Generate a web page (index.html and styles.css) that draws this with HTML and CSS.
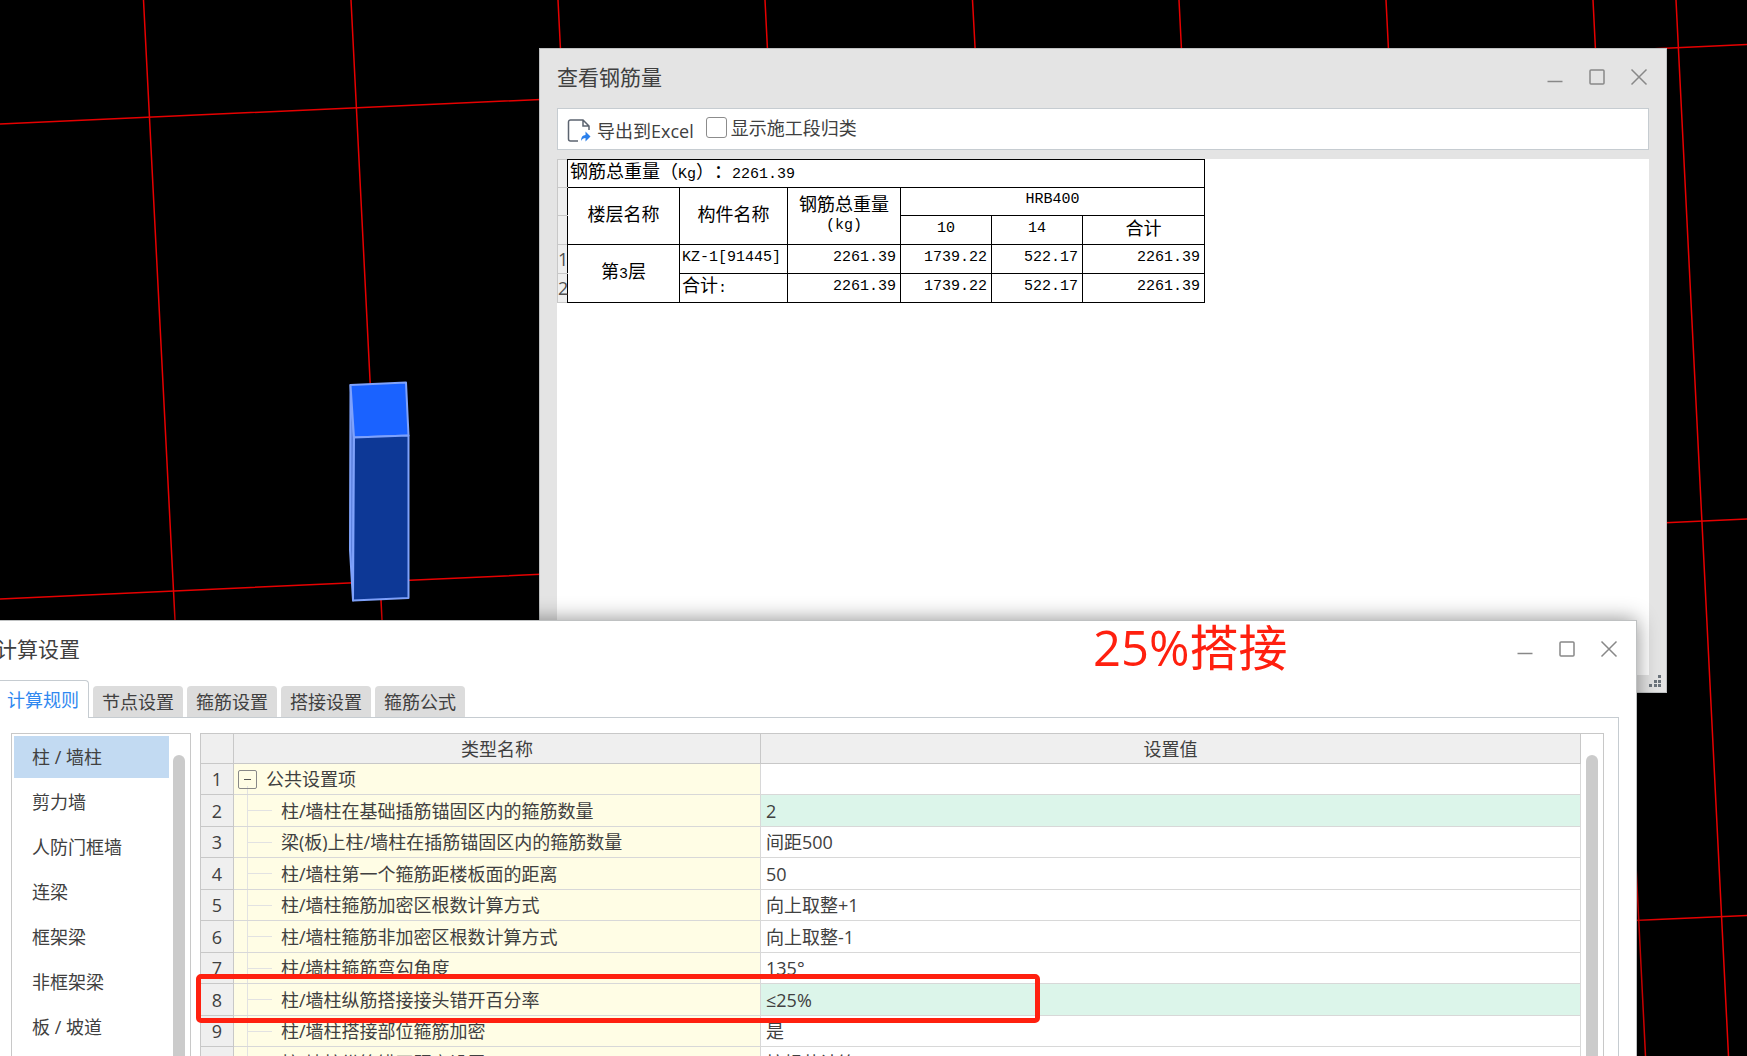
FILE: index.html
```html
<!DOCTYPE html>
<html lang="zh-CN">
<head>
<meta charset="utf-8">
<meta name="viewport" content="width=device-width, initial-scale=1">
<title>计算设置</title>
<link rel="stylesheet" href="styles.css">
</head>
<body>
<main class="desktop">
  <svg class="scene" aria-hidden="true">
    <g class="axis">
      <path d="M0 124L1747 44.500M0 599L1747 519M1600 922L1747 915.500"/>
      <path d="M143.500 0L175.500 630M351 0L382.500 630M558 0L565 140M765 0L772 140M972.500 0L980 140M1179 0L1186 140M1386 0L1393 140M1593 0L1645.500 1056M1676 0L1728.500 1056"/>
    </g>
    <g class="column">
      <path class="column-side" d="M350.500 385L354 437.500L353 600.500L350 550Z"/>
      <path class="column-top" d="M350.500 385L406 382.500L408.500 435.500L354 437.500Z"/>
      <path class="column-front" d="M354 437.500L408.500 435.500V598L353 600.500Z"/>
    </g>
  </svg>

  <section class="window window-report" aria-labelledby="report-title">
    <header class="titlebar">
      <h2 class="title" id="report-title">查看钢筋量</h2>
      <div class="controls">
        <button class="control" type="button" aria-label="最小化"><svg viewBox="0 0 18 18"><path d="M1.500 13.500h15"/></svg></button>
        <button class="control" type="button" aria-label="最大化"><svg viewBox="0 0 18 18"><rect x="2" y="2" width="14" height="14" rx="1"/></svg></button>
        <button class="control" type="button" aria-label="关闭"><svg viewBox="0 0 18 18"><path d="M1.500 1.500l15 15M16.500 1.500l-15 15"/></svg></button>
      </div>
    </header>
    <div class="toolbar">
      <button class="export" type="button">
        <svg class="export-icon" viewBox="0 0 24 24" aria-hidden="true">
          <path class="sheet" d="M11 22H3.500a2 2 0 0 1-2-2V3a2 2 0 0 1 2-2H16l6 6v4M16 1v6h6"/>
          <path class="arrow" d="M14 22c0-4 1.500-6 4.500-6v-3.500l5 5-5 5V19c-2 0-3.500 1-4.500 3z"/>
        </svg>
        <span>导出到Excel</span>
      </button>
      <label class="check"><input class="check-box" type="checkbox">显示施工段归类</label>
    </div>
    <div class="report">
      <table class="report-table">
        <colgroup><col class="c-index"><col class="c-floor"><col class="c-member"><col class="c-total"><col class="c-dia"><col class="c-dia"><col class="c-sum"></colgroup>
        <tbody>
          <tr><th class="index"></th><td class="left" colspan="6"><span class="han">钢筋总重量（</span>Kg<span class="han">）：</span>2261.39</td></tr>
          <tr><th class="index"></th><th class="han" rowspan="2">楼层名称</th><th class="han" rowspan="2">构件名称</th><th rowspan="2"><span class="han">钢筋总重量</span><br>(kg)</th><th colspan="3">HRB400</th></tr>
          <tr><th class="index"></th><th>10</th><th>14</th><th class="han">合计</th></tr>
          <tr><th class="index">1</th><td class="center" rowspan="2"><span class="han">第</span>3<span class="han">层</span></td><td class="left">KZ-1[91445]</td><td>2261.39</td><td>1739.22</td><td>522.17</td><td>2261.39</td></tr>
          <tr><th class="index">2</th><td class="left"><span class="han">合计</span>:</td><td>2261.39</td><td>1739.22</td><td>522.17</td><td>2261.39</td></tr>
        </tbody>
      </table>
    </div>
    <svg class="grip" viewBox="0 0 13 13" aria-hidden="true"><path d="M9 0h3v3H9zM5 5h3v3H5zM9 5h3v3H9zM0 9h3v3H0zM5 9h3v3H5zM9 9h3v3H9z"/></svg>
  </section>

  <section class="window window-settings" aria-labelledby="settings-title">
    <header class="titlebar">
      <h2 class="title" id="settings-title">计算设置</h2>
      <div class="controls">
        <button class="control" type="button" aria-label="最小化"><svg viewBox="0 0 18 18"><path d="M1.500 13.500h15"/></svg></button>
        <button class="control" type="button" aria-label="最大化"><svg viewBox="0 0 18 18"><rect x="2" y="2" width="14" height="14" rx="1"/></svg></button>
        <button class="control" type="button" aria-label="关闭"><svg viewBox="0 0 18 18"><path d="M1.500 1.500l15 15M16.500 1.500l-15 15"/></svg></button>
      </div>
    </header>
    <div class="tabs" role="tablist">
      <button class="tab tab-active" type="button" role="tab" aria-selected="true">计算规则</button>
      <button class="tab" type="button" role="tab">节点设置</button>
      <button class="tab" type="button" role="tab">箍筋设置</button>
      <button class="tab" type="button" role="tab">搭接设置</button>
      <button class="tab" type="button" role="tab">箍筋公式</button>
    </div>
    <div class="panel">
      <nav class="sidebar">
        <div class="items">
          <button class="item item-active" type="button">柱 / 墙柱</button>
          <button class="item" type="button">剪力墙</button>
          <button class="item" type="button">人防门框墙</button>
          <button class="item" type="button">连梁</button>
          <button class="item" type="button">框架梁</button>
          <button class="item" type="button">非框架梁</button>
          <button class="item" type="button">板 / 坡道</button>
        </div>
        <div class="scrollbar"></div>
      </nav>
      <div class="grid">
        <table class="rules">
          <colgroup><col class="r-index"><col class="r-name"><col></colgroup>
          <thead><tr><th></th><th>类型名称</th><th>设置值</th></tr></thead>
          <tbody>
            <tr class="group"><th>1</th><td class="name"><button class="toggle" type="button" aria-label="折叠"></button>公共设置项</td><td></td></tr>
            <tr class="changed"><th>2</th><td class="name">柱/墙柱在基础插筋锚固区内的箍筋数量</td><td>2</td></tr>
            <tr><th>3</th><td class="name">梁(板)上柱/墙柱在插筋锚固区内的箍筋数量</td><td>间距500</td></tr>
            <tr><th>4</th><td class="name">柱/墙柱第一个箍筋距楼板面的距离</td><td>50</td></tr>
            <tr><th>5</th><td class="name">柱/墙柱箍筋加密区根数计算方式</td><td>向上取整+1</td></tr>
            <tr><th>6</th><td class="name">柱/墙柱箍筋非加密区根数计算方式</td><td>向上取整-1</td></tr>
            <tr><th>7</th><td class="name">柱/墙柱箍筋弯勾角度</td><td>135°</td></tr>
            <tr class="changed"><th>8</th><td class="name">柱/墙柱纵筋搭接接头错开百分率</td><td>≤25%</td></tr>
            <tr><th>9</th><td class="name">柱/墙柱搭接部位箍筋加密</td><td>是</td></tr>
            <tr><th>10</th><td class="name">柱/墙柱纵筋错开距离设置</td><td>按规范计算</td></tr>
          </tbody>
        </table>
        <div class="scrollbar"></div>
      </div>
    </div>
    <p class="note">25%搭接</p>
    <div class="highlight"></div>
  </section>
</main>
</body>
</html>
```
FILE: styles.css
```css
* {
  box-sizing: border-box;
}

body {
  margin: 0;
  background: #000;
  color: #404040;
  font: 18px/24px "Open Sans", "Noto Sans CJK SC", sans-serif;
}

button {
  padding: 0;
  border: 0;
  background: none;
  color: inherit;
  font: inherit;
}

.desktop {
  position: relative;
  height: 100vh;
  overflow: hidden;
}

/* 3D view */
.scene {
  display: block;
  width: 100%;
  height: 100%;
}

.axis {
  fill: none;
  stroke: #e60000;
  stroke-width: 1.5;
}

.column {
  stroke: #7fa2fb;
  stroke-width: 2;
  stroke-linejoin: round;
}

.column-side { fill: #5c80dc; }
.column-top { fill: #1a62ff; }
.column-front { fill: #0d3896; }

/* Windows */
.window {
  position: absolute;
  display: flex;
  flex-direction: column;
  border: 1px solid #bfc1c2;
}

.window-report {
  top: 48px;
  left: 539px;
  right: 80px;
  height: 645px;
  padding: 0 17px 17px;
  background: #e4e4e4;
}

.window-settings {
  top: 620px;
  left: -20px;
  right: 110px;
  bottom: -20px;
  background: #fff;
  box-shadow: 0 0 20px rgba(0, 0, 0, 0.45);
}

.titlebar {
  display: flex;
  flex: none;
  align-items: center;
  justify-content: space-between;
  height: 59px;
  padding-bottom: 4px;
}

.window-settings .titlebar {
  padding-right: 18px;
  padding-left: 15px;
}

.title {
  margin: 0;
  font-size: 21px;
  font-weight: 400;
  line-height: 28px;
}

.controls {
  display: flex;
  gap: 24px;
}

.window-report .controls {
  padding-right: 1px;
}

.control {
  width: 18px;
  height: 18px;
}

.control svg {
  display: block;
  fill: none;
  stroke: #888;
  stroke-width: 1.5;
}

/* Report window */
.toolbar {
  display: flex;
  flex: none;
  gap: 12px;
  align-items: center;
  height: 42px;
  padding: 0 9px;
  border: 1px solid #c6ccd1;
  background: #fff;
}

.export {
  display: flex;
  gap: 6px;
  align-items: center;
  padding-top: 4px;
}

.export-icon {
  width: 24px;
  height: 24px;
}

.sheet {
  fill: none;
  stroke: #5c6470;
  stroke-width: 1.5;
}

.arrow {
  fill: #2a80ec;
}

.check {
  display: flex;
  gap: 4px;
  align-items: center;
  padding-bottom: 3px;
}

.check-box {
  width: 21px;
  height: 21px;
  margin: 0;
  border: 1px solid #8c8c8c;
  border-radius: 3px;
  appearance: none;
  background: #fff;
}

.report {
  flex: 1;
  margin-top: 9px;
  background: #fff;
}

.report-table {
  width: 648px;
  border-collapse: collapse;
  table-layout: fixed;
  color: #000;
  font: 15px/18px "Liberation Mono", "Noto Sans CJK SC", monospace;
  text-spacing-trim: space-all;
}

.c-index { width: 10px; }
.c-floor { width: 112px; }
.c-member { width: 108px; }
.c-total { width: 113px; }
.c-dia { width: 91px; }

.report-table tr {
  height: 28px;
}

.report-table tr:nth-child(n+3) {
  height: 29px;
}

.report-table th,
.report-table td {
  padding: 0 4px 3px;
  border: 1px solid #000;
  font-weight: 400;
  text-align: right;
  white-space: nowrap;
}

.report-table th,
.report-table .center {
  text-align: center;
}

.report-table .left {
  padding: 0 2px 3px;
  text-align: left;
}

.han {
  font: 18px/18px "Noto Sans CJK SC", sans-serif;
}

.report-table th.han {
  padding-bottom: 6px;
}

.report-table .index {
  padding: 0;
  border-color: #c8c8c8;
  border-right-color: #000;
  background: #efefef;
  color: #505050;
  font-family: "Open Sans", sans-serif;
  font-size: 18px;
}

.grip {
  position: absolute;
  right: 4px;
  bottom: 4px;
  width: 13px;
  height: 13px;
  fill: #6c747c;
}

/* Settings window */
.tabs {
  display: flex;
  flex: none;
  gap: 4px;
  align-items: flex-end;
  height: 37px;
  padding-left: 16px;
}

.tab {
  height: 31px;
  padding: 0 9px;
  border-radius: 4px 4px 0 0;
  background: #dcdcdc;
}

.tab-active {
  z-index: 1;
  height: 38px;
  margin-bottom: -1px;
  border: 1px solid #c6ccd1;
  border-bottom: 0;
  background: #fff;
  color: #2f88f0;
}

.panel {
  display: flex;
  flex: 1;
  gap: 9px;
  min-height: 0;
  margin-right: 17px;
  padding: 15px 14px 0 30px;
  border: 1px solid #c6ccd1;
  border-width: 1px 1px 0 0;
}

.sidebar {
  display: flex;
  flex: none;
  justify-content: space-between;
  width: 180px;
  padding: 2px 5px 0 2px;
  border: 1px solid #c8c8c8;
}

.items {
  display: flex;
  flex-direction: column;
  gap: 3px;
  width: 155px;
}

.item {
  flex: none;
  height: 42px;
  padding-left: 18px;
  text-align: left;
}

.item-active {
  background: #c2daf2;
}

.scrollbar {
  flex: none;
  width: 12px;
  margin-top: 19px;
  border-radius: 6px 6px 0 0;
  background: #cbcbcb;
}

.grid {
  display: flex;
  flex: 1;
  gap: 5px;
  min-width: 0;
  padding-right: 5px;
  overflow: hidden;
  border: 1px solid #c8c8c8;
}

.grid .scrollbar {
  margin-top: 21px;
}

.rules {
  flex: 1;
  align-self: flex-start;
  border-collapse: separate;
  border-spacing: 0;
  table-layout: fixed;
}

.r-index { width: 33px; }
.r-name { width: 527px; }

.rules thead tr { height: 30px; }
.rules tbody tr { height: 31px; }
.rules tbody tr:nth-child(even) { height: 32px; }

.rules th,
.rules td {
  padding: 0 5px;
  border: 1px solid #d8d8d8;
  border-width: 0 1px 1px 0;
  font-weight: 400;
  text-align: left;
  white-space: nowrap;
}

.rules th {
  padding: 0;
  border-color: #c8c8c8;
  background: #efefef;
  text-align: center;
}

.rules .changed td {
  background: #dcf5ea;
}

/* Tree guides: a vertical rule with a branch to each setting */
.rules tr .name {
  padding-left: 47px;
  background:
    linear-gradient(#e2e2e2, #e2e2e2) 13px 0 / 1px 100% no-repeat,
    linear-gradient(#e2e2e2, #e2e2e2) 13px 50% / 25px 1px no-repeat,
    #fffde5;
}

.rules .group .name {
  padding-left: 4px;
  background: linear-gradient(#e2e2e2, #e2e2e2) 13px 100% / 1px 8px no-repeat, #fffde5;
}

.toggle {
  width: 19px;
  height: 19px;
  margin-right: 9px;
  border: 1px solid #888;
  border-radius: 2px;
  background: linear-gradient(#555, #555) center / 7px 1px no-repeat;
  vertical-align: -2px;
}

/* Annotations */
.note {
  position: absolute;
  top: -2px;
  left: 1112px;
  margin: 0;
  color: #ff200f;
  font-size: 49px;
  line-height: 56px;
}

.highlight {
  position: absolute;
  top: 353px;
  left: 215px;
  width: 844px;
  height: 49px;
  border: 5px solid #ff200f;
  border-radius: 5px;
}
```
